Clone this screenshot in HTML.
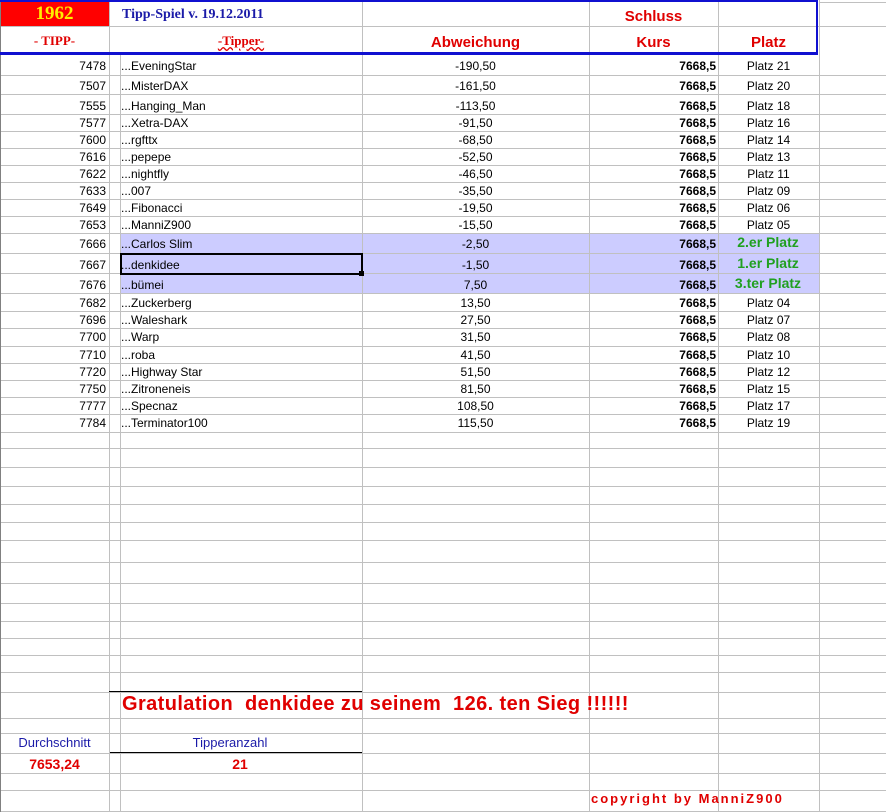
<!DOCTYPE html>
<html><head><meta charset="utf-8"><style>
body{margin:0;width:886px;height:812px;background:#fff;position:relative;overflow:hidden;font-family:"Liberation Sans",Arial,sans-serif;}
.h{position:absolute;height:1px;background:#c0c0c0;}
.v{position:absolute;width:1px;background:#c0c0c0;}
.t{position:absolute;font-size:12px;line-height:14px;white-space:nowrap;color:#000;}
.r{text-align:right}
.c{text-align:center}
.b{font-weight:bold}
.red{color:#e00000}
.grn{color:#20a020;font-weight:bold;font-size:14px}
.tm{font-family:"Liberation Serif",serif;font-weight:bold}
</style></head><body>
<!-- highlight -->
<div style="position:absolute;left:120px;top:233px;width:699px;height:61px;background:#ccccff"></div>
<!-- red cell -->
<div style="position:absolute;left:0;top:0;width:109px;height:26px;background:#ff0000"></div>
<div id="g"></div>
<script>
var g=document.getElementById('g'),s='';
var hy=[26,75,94,114,131,148,165,182,199,216,233,253,273,293,311,328,346,363,380,397,414,432,448,467,486,504,522,540,562,583,603,621,638,655,672,692,718,733,753,773,790,811];
hy.forEach(function(y){s+='<div class="h" style="left:0;top:'+y+'px;width:886px"></div>';});
s+='<div class="h" style="left:819px;top:2px;width:67px"></div>';
[[109,0,812],[120,53,759],[362,0,812],[589,0,812],[718,0,812],[819,0,812]].forEach(function(v){s+='<div class="v" style="left:'+v[0]+'px;top:'+v[1]+'px;height:'+v[2]+'px"></div>';});
s+='<div class="v" style="left:0;top:0;height:812px;background:#808080"></div>';
var d=[[7478,'EveningStar','-190,50','Platz 21'],[7507,'MisterDAX','-161,50','Platz 20'],[7555,'Hanging_Man','-113,50','Platz 18'],[7577,'Xetra-DAX','-91,50','Platz 16'],[7600,'rgfttx','-68,50','Platz 14'],[7616,'pepepe','-52,50','Platz 13'],[7622,'nightfly','-46,50','Platz 11'],[7633,'007','-35,50','Platz 09'],[7649,'Fibonacci','-19,50','Platz 06'],[7653,'ManniZ900','-15,50','Platz 05'],[7666,'Carlos Slim','-2,50','2.er Platz'],[7667,'denkidee','-1,50','1.er Platz'],[7676,'bümei','7,50','3.ter Platz'],[7682,'Zuckerberg','13,50','Platz 04'],[7696,'Waleshark','27,50','Platz 07'],[7700,'Warp','31,50','Platz 08'],[7710,'roba','41,50','Platz 10'],[7720,'Highway Star','51,50','Platz 12'],[7750,'Zitroneneis','81,50','Platz 15'],[7777,'Specnaz','108,50','Platz 17'],[7784,'Terminator100','115,50','Platz 19']];
var ty=[59,79,99,116,133,150,167,184,201,218,237,258,278,296,313,330,348,365,382,399,416];
d.forEach(function(r,i){var y=ty[i];
s+='<div class="t r" style="left:40px;width:66px;top:'+y+'px">'+r[0]+'</div>';
s+='<div class="t" style="left:121px;top:'+y+'px">...'+r[1]+'</div>';
s+='<div class="t c" style="left:362px;width:227px;top:'+y+'px">'+r[2]+'</div>';
s+='<div class="t r b" style="left:600px;width:116px;top:'+y+'px">7668,5</div>';
if(i>=10&&i<=12)s+='<div class="t c grn" style="left:718px;width:100px;top:'+(y-2)+'px">'+r[3]+'</div>';
else s+='<div class="t c" style="left:718px;width:101px;top:'+y+'px">'+r[3]+'</div>';
});
g.innerHTML=s;
</script>
<!-- blue frame -->
<div style="position:absolute;left:0;top:0;width:816px;height:50px;border:2px solid #1010d0;border-left:none;border-bottom:3px solid #1010d0"></div>
<div class="t tm" style="left:0;width:109px;top:4px;font-size:19px;line-height:20px;color:#ffee00;text-align:center">1962</div>
<div class="t tm" style="left:122px;top:8px;font-size:14px;color:#1a1aa8">Tipp-Spiel v. 19.12.2011</div>
<div class="t tm c red" style="left:0;width:109px;top:34px;font-size:13px">- TIPP-</div>
<div class="t tm c red" style="left:120px;width:242px;top:34px;font-size:13px;text-decoration:underline wavy #e00000">-Tipper-</div>
<div class="t b c red" style="left:589px;width:129px;top:8px;font-size:15px;line-height:17px">Schluss</div>
<div class="t b c red" style="left:362px;width:227px;top:34px;font-size:15px;line-height:17px">Abweichung</div>
<div class="t b c red" style="left:589px;width:129px;top:34px;font-size:15px;line-height:17px">Kurs</div>
<div class="t b c red" style="left:718px;width:101px;top:34px;font-size:15px;line-height:17px">Platz</div>
<!-- selection -->
<div style="position:absolute;left:120px;top:253px;width:239px;height:18px;border:2px solid #000"></div>
<div style="position:absolute;left:359px;top:271px;width:5px;height:5px;background:#000"></div>
<!-- bottom -->
<div style="position:absolute;left:109px;top:691px;width:253px;height:1px;background:#000"></div>
<div style="position:absolute;left:110px;top:752px;width:252px;height:1px;background:#000"></div>
<div class="t b red" style="left:122px;top:692px;font-size:20px;line-height:24px;letter-spacing:0.4px">Gratulation&nbsp; denkidee zu seinem&nbsp; 126. ten Sieg !!!!!!</div>
<div class="t c" style="left:0;width:109px;top:736px;color:#1a1aa8;font-size:13px">Durchschnitt</div>
<div class="t c" style="left:120px;width:220px;top:736px;color:#1a1aa8;font-size:13px">Tipperanzahl</div>
<div class="t c b red" style="left:0;width:109px;top:756px;font-size:14px;line-height:16px">7653,24</div>
<div class="t c b red" style="left:130px;width:220px;top:756px;font-size:14px;line-height:16px">21</div>
<div class="t b red" style="left:591px;top:792px;font-size:13px;letter-spacing:2px">copyright by ManniZ900</div>
</body></html>
